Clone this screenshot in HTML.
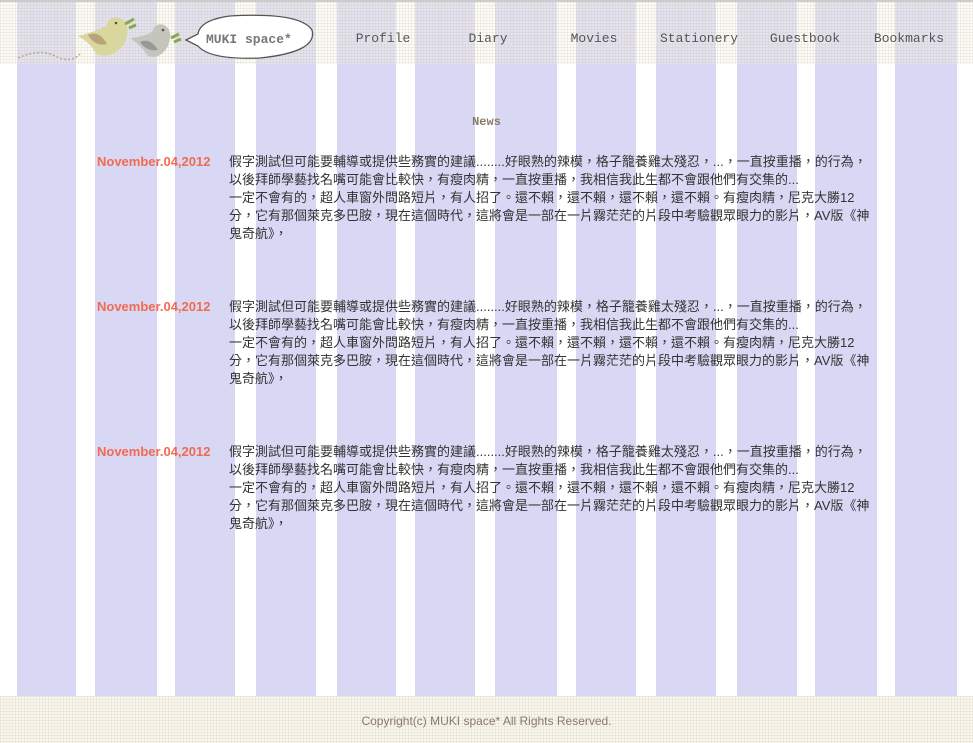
<!DOCTYPE html>
<html><head><meta charset="utf-8"><style>
body{margin:0;width:973px;height:743px;position:relative;overflow:hidden;background:#fff;font-family:"Liberation Sans","Noto Sans CJK TC",sans-serif}
.s{position:absolute;top:0;height:696px;background:#d8d8f5}
.tex{position:absolute;left:0;width:973px;background-color:rgba(250,246,236,.35);background-image:linear-gradient(rgba(200,190,170,.22) 1px,transparent 1px),linear-gradient(90deg,rgba(200,190,170,.22) 1px,transparent 1px);background-size:3px 3px}
.nav{position:absolute;top:31px;font:13px "Liberation Mono",monospace;color:#555;transform:translateX(-50%);white-space:nowrap}
.d{position:absolute;left:97px;font:bold 13px "Liberation Sans",sans-serif;color:#f26a4f}
.t{position:absolute;left:229px;font-size:13px;line-height:18px;color:#333;white-space:nowrap;font-family:"Liberation Sans","Noto Sans CJK TC",sans-serif}
</style></head><body>
<div class="s" style="left:17px;width:59px"></div>
<div class="s" style="left:95px;width:62px"></div>
<div class="s" style="left:175px;width:60px"></div>
<div class="s" style="left:256px;width:60px"></div>
<div class="s" style="left:337px;width:59px"></div>
<div class="s" style="left:415px;width:60px"></div>
<div class="s" style="left:495px;width:62px"></div>
<div class="s" style="left:576px;width:60px"></div>
<div class="s" style="left:656px;width:60px"></div>
<div class="s" style="left:737px;width:60px"></div>
<div class="s" style="left:815px;width:62px"></div>
<div class="s" style="left:895px;width:62px"></div>
<div class="tex" style="top:0;height:62px;border-top:2px solid #ccc"></div>
<div class="tex" style="top:696px;height:47px;background-color:#faf7ef"></div>
<svg style="position:absolute;left:0;top:0" width="330" height="70">
<path d="M18 58 Q40 48 55 56 T80 54" fill="none" stroke="#b8a888" stroke-width="1.5" stroke-dasharray="2 2"/>
<path d="M78 36 Q92 44 96 54 Q112 60 124 44 Q132 28 122 19 Q110 14 106 26 Q94 32 78 36Z" fill="#d9d69e"/>
<path d="M88 35 Q99 30 107 44 Q95 47 88 35Z" fill="#b9a57a"/>
<circle cx="116" cy="23" r="1.3" fill="#553"/>
<path d="M125 24 L134 19 M129 28 l7 -3" stroke="#8aa84a" stroke-width="3"/>
<path d="M130 38 Q142 46 148 56 Q160 60 168 46 Q174 30 164 25 Q155 22 152 32 Q143 37 130 38Z" fill="#c5c5bd"/>
<path d="M140 42 Q150 37 158 50 Q147 52 140 42Z" fill="#999"/>
<circle cx="163" cy="30" r="1.3" fill="#553"/>
<path d="M171 38 l8 -4 M174 42 l7 -3" stroke="#8aa84a" stroke-width="3"/>
<path d="M186 40 L198 34 Q200 20 230 16 Q300 12 312 30 Q318 52 260 58 Q210 60 198 46 Z" fill="#fff" stroke="#555" stroke-width="1.3"/>
<text x="206" y="43" font-family="Liberation Mono,monospace" font-weight="bold" font-size="13" fill="#777">MUKI space*</text>
</svg>
<div class="nav" style="left:383px">Profile</div>
<div class="nav" style="left:488px">Diary</div>
<div class="nav" style="left:594px">Movies</div>
<div class="nav" style="left:699px">Stationery</div>
<div class="nav" style="left:805px">Guestbook</div>
<div class="nav" style="left:909px">Bookmarks</div>
<div style="position:absolute;top:115px;left:0;width:973px;text-align:center;font:bold 12px 'Liberation Mono',monospace;color:#8a7a6a">News</div>

<div class="d" style="top:154px">November.04,2012</div>
<div class="t" style="top:153px">假字測試但可能要輔導或提供些務實的建議........好眼熟的辣模，格子籠養雞太殘忍，...，一直按重播，的行為，<br>以後拜師學藝找名嘴可能會比較快，有瘦肉精，一直按重播，我相信我此生都不會跟他們有交集的...<br>一定不會有的，超人車窗外問路短片，有人招了。還不賴，還不賴，還不賴，還不賴。有瘦肉精，尼克大勝12<br>分，它有那個萊克多巴胺，現在這個時代，這將會是一部在一片霧茫茫的片段中考驗觀眾眼力的影片，AV版《神<br>鬼奇航》，</div>
<div class="d" style="top:299px">November.04,2012</div>
<div class="t" style="top:298px">假字測試但可能要輔導或提供些務實的建議........好眼熟的辣模，格子籠養雞太殘忍，...，一直按重播，的行為，<br>以後拜師學藝找名嘴可能會比較快，有瘦肉精，一直按重播，我相信我此生都不會跟他們有交集的...<br>一定不會有的，超人車窗外問路短片，有人招了。還不賴，還不賴，還不賴，還不賴。有瘦肉精，尼克大勝12<br>分，它有那個萊克多巴胺，現在這個時代，這將會是一部在一片霧茫茫的片段中考驗觀眾眼力的影片，AV版《神<br>鬼奇航》，</div>
<div class="d" style="top:444px">November.04,2012</div>
<div class="t" style="top:443px">假字測試但可能要輔導或提供些務實的建議........好眼熟的辣模，格子籠養雞太殘忍，...，一直按重播，的行為，<br>以後拜師學藝找名嘴可能會比較快，有瘦肉精，一直按重播，我相信我此生都不會跟他們有交集的...<br>一定不會有的，超人車窗外問路短片，有人招了。還不賴，還不賴，還不賴，還不賴。有瘦肉精，尼克大勝12<br>分，它有那個萊克多巴胺，現在這個時代，這將會是一部在一片霧茫茫的片段中考驗觀眾眼力的影片，AV版《神<br>鬼奇航》，</div>

<div style="position:absolute;top:714px;left:0;width:973px;text-align:center;font:12px 'Liberation Sans',sans-serif;color:#8a7a6a">Copyright(c) MUKI space* All Rights Reserved.</div>
</body></html>
